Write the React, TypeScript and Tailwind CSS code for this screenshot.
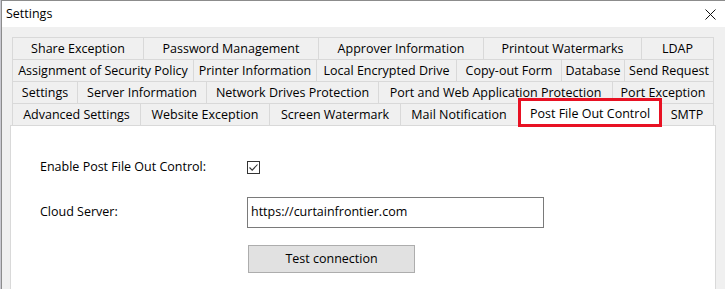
import React from "react";

type Tab = { label: string; w: number; selected?: boolean };

const rows: Tab[][] = [
  [
    { label: "Share Exception", w: 131 },
    { label: "Password Management", w: 175 },
    { label: "Approver Information", w: 165 },
    { label: "Printout Watermarks", w: 158 },
    { label: "LDAP", w: 72 },
  ],
  [
    { label: "Assignment of Security Policy", w: 181 },
    { label: "Printer Information", w: 123 },
    { label: "Local Encrypted Drive", w: 140 },
    { label: "Copy-out Form", w: 105 },
    { label: "Database", w: 63 },
    { label: "Send Request", w: 89 },
  ],
  [
    { label: "Settings", w: 65 },
    { label: "Server Information", w: 129 },
    { label: "Network Drives Protection", w: 172 },
    { label: "Port and Web Application Protection", w: 234 },
    { label: "Port Exception", w: 101 },
  ],
  [
    { label: "Advanced Settings", w: 128 },
    { label: "Website Exception", w: 129 },
    { label: "Screen Watermark", w: 131 },
    { label: "Mail Notification", w: 117 },
    { label: "Post File Out Control", w: 143, selected: true },
    { label: "SMTP", w: 53 },
  ],
];

function TabItem({ tab, last }: { tab: Tab; last: boolean }) {
  if (tab.selected) {
    return (
      <div
        className="relative z-10 h-[22px] shrink-0"
        style={{ width: tab.w }}
      >
        <div className="absolute left-[2px] right-[-1px] top-[-3px] bottom-[-2px] bg-white border-l border-t border-r border-[#d9d9d9] flex items-center justify-center">
          <span className="whitespace-nowrap">{tab.label}</span>
        </div>
        <div className="absolute left-[1px] top-[-5px] w-[144px] h-[29px] border-[3px] border-[#e81123]" />
      </div>
    );
  }
  return (
    <div
      className={
        "h-[22px] shrink-0 flex items-center justify-center border-l border-t border-[#d9d9d9] bg-[#f0f0f0] pt-px " +
        (last ? "border-r" : "")
      }
      style={{ width: tab.w + (last ? 1 : 0) }}
    >
      <span className="whitespace-nowrap">{tab.label}</span>
    </div>
  );
}

export default function App() {
  return (
    <div
      className="w-[725px] h-[289px] overflow-hidden bg-[#c8c8d0] text-[12.5px] text-black"
      style={{ fontFamily: '"Open Sans", "Noto Sans", sans-serif' }}
    >
      <div className="ml-px h-[289px] border-l border-t border-[#8c8c8c] flex flex-col">
        {/* Title bar */}
        <div className="h-[26px] bg-white flex items-center justify-between pl-[4px] pr-[9px] shrink-0">
          <span className="text-[12.5px] pt-px">Settings</span>
          <svg width="11" height="11" viewBox="0 0 11 11" className="mt-px">
            <path d="M0.5 0.5 L10.5 10.5 M10.5 0.5 L0.5 10.5" stroke="#111" strokeWidth="1" />
          </svg>
        </div>
        {/* Body */}
        <div className="flex-1 bg-[#f0f0f0] pt-[10px] pl-[8px] flex flex-col">
          <div className="ml-[2px] flex flex-col">
            {rows.map((row, i) => (
              <div key={i} className="flex h-[22px]">
                {row.map((t, j) => (
                  <TabItem key={j} tab={t} last={j === row.length - 1} />
                ))}
              </div>
            ))}
          </div>
          {/* Panel */}
          <div className="w-[706px] flex-1 bg-white border-l border-t border-r border-[#d9d9d9] pl-[29px] pt-[35px] flex flex-col">
            <div className="flex items-center h-[13px]">
              <div className="w-[207px] whitespace-nowrap">Enable Post File Out Control:</div>
              <div className="w-[13px] h-[13px] border border-[#333] bg-white flex items-center justify-center">
                <svg width="11" height="11" viewBox="0 0 11 11">
                  <path d="M1.5 5.5 L4.2 8.2 L9.5 2.5" stroke="#333" strokeWidth="1.1" fill="none" />
                </svg>
              </div>
            </div>
            <div className="flex items-center mt-[23px] h-[31px]">
              <div className="w-[207px] whitespace-nowrap">Cloud Server:</div>
              <div className="w-[297px] h-[31px] border border-[#7a7a7a] bg-white flex items-center pl-[3px] pb-px">
                https://curtainfrontier.com
              </div>
            </div>
            <div className="flex mt-[17px]">
              <div className="w-[208px]" />
              <div className="w-[167px] h-[28px] bg-[#e1e1e1] border border-[#adadad] flex items-center justify-center">
                Test connection
              </div>
            </div>
          </div>
        </div>
      </div>
    </div>
  );
}
